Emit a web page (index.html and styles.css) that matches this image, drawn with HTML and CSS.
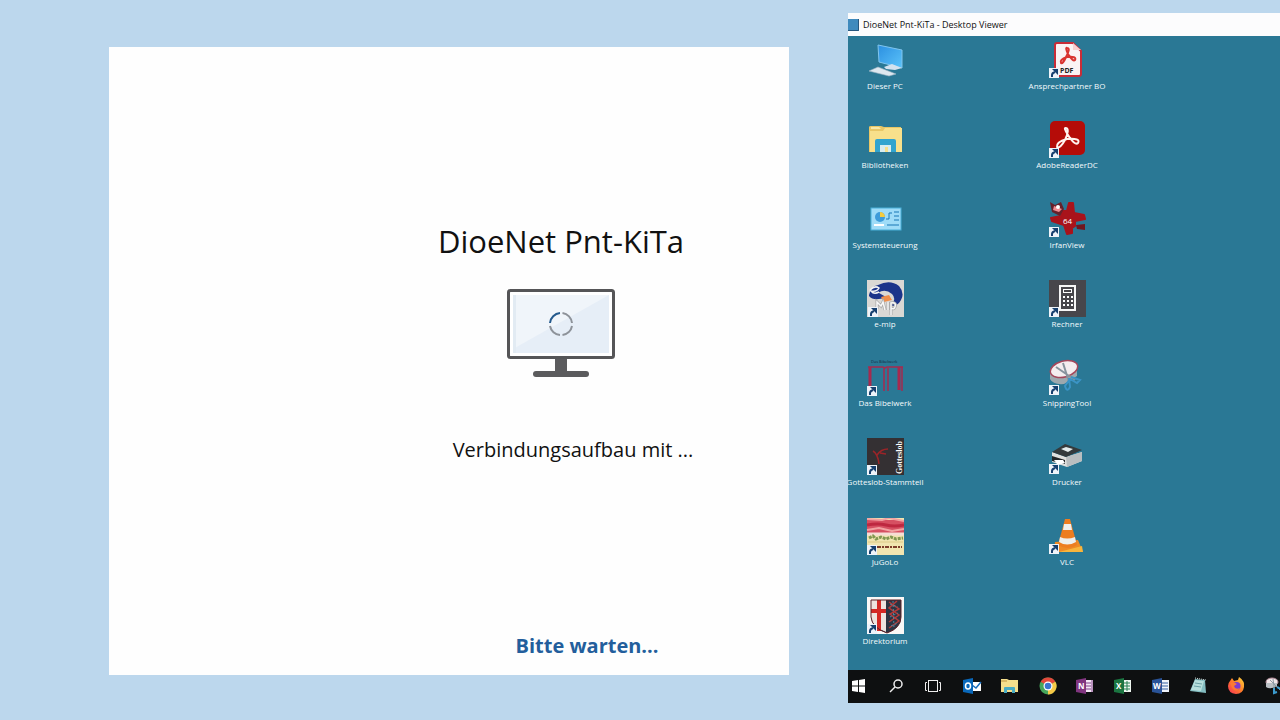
FILE: index.html
```html
<!DOCTYPE html>
<html lang="de">
<head>
<meta charset="utf-8">
<meta name="viewport" content="width=device-width, initial-scale=1">
<title>DioeNet Pnt-KiTa</title>
<link rel="stylesheet" href="styles.css">
</head>
<body>
<svg class="defs" aria-hidden="true">
  <defs>
    <symbol id="shortcut" viewBox="0 0 10 10"><rect width="10" height="10" fill="#eef3f9"/><path d="M3 9V7Q3 5 6 4" fill="none" stroke="#17406f" stroke-width="2"/><path d="M3 1H9V7z" fill="#17406f"/></symbol>
    <linearGradient id="screen" x1="0" y1="0" x2="1" y2="1"><stop offset="0" stop-color="#2b8fe0"/><stop offset="1" stop-color="#5cc3fa"/></linearGradient>
    <linearGradient id="fox" x1="0" y1="1" x2="1" y2="0"><stop offset="0" stop-color="#f5305a"/><stop offset=".5" stop-color="#ff7a2a"/><stop offset="1" stop-color="#ffdc3c"/></linearGradient>
  </defs>
</svg>
<main class="page">
  <section class="connect">
    <div class="connect-body">
      <h1 class="connect-title">DioeNet Pnt-KiTa</h1>
      <svg class="monitor" viewBox="0 0 110 90" aria-hidden="true">
        <rect x="2.5" y="2.5" width="105" height="67" rx="2" fill="#fff" stroke="#555557" stroke-width="3"/>
        <rect x="7" y="7" width="96" height="58" fill="#e6eef7"/>
        <path d="M7 7H103L7 61z" fill="#f0f5fa"/>
        <rect x="7" y="7" width="3" height="58" fill="#e2ebf3"/>
        <path d="M49 71H61V84H49z" fill="#5b5b5d"/>
        <rect x="27" y="83" width="56" height="6" rx="3" fill="#5b5b5d"/>
        <g fill="none" stroke-width="2"><path d="M44 35A11 11 0 0 1 54 25" stroke="#245a8d"/><path d="M56.500 25A11 11 0 0 1 66 35M66 38A11 11 0 0 1 56.500 47M54 47A11 11 0 0 1 44 38" stroke="#8d9299"/></g>
      </svg>
      <p class="connect-message">Verbindungsaufbau mit ...</p>
    </div>
    <p class="connect-wait" role="status">Bitte warten...</p>
  </section>

  <section class="viewer">
    <header class="titlebar">
      <svg class="titlebar-icon" viewBox="0 0 12 12" aria-hidden="true"><rect width="11" height="12" fill="#3f8abd"/><path d="M0 11.500H10.500V0" fill="none" stroke="#27577e"/></svg>
      <span>DioeNet Pnt-KiTa - Desktop Viewer</span>
    </header>
    <div class="desktop">
      <button class="item"><svg class="icon" viewBox="0 0 38 38"><path d="M12 3L36 8V26L13 20z" fill="url(#screen)" stroke="#80c5ee"/><path d="M18 25L26 22L36 26L29 28L20 27z" fill="#d4e2ef"/><path d="M3 29L12 25L30 32L23 34z" fill="#dde7ef" stroke="#9db3c3" stroke-width=".6"/></svg><span>Dieser PC</span></button>
      <button class="item"><svg class="icon" viewBox="0 0 38 38"><path d="M3 6Q3 5 5 5H15L18 6H35V31H3z" fill="#e9c766"/><path d="M5 6H13L15 8H5z" fill="#f7e7a7"/><path d="M4 10H17L19 7H36V31H4z" fill="#f8e08b"/><path d="M9 31V20Q9 18 11 18H28Q30 18 30 20V31H25V24H14V31z" fill="#31a4cf"/><path d="M14 24H25V31H22V26H19V31H14z" fill="#d8edf0"/></svg><span>Bibliotheken</span></button>
      <button class="item"><svg class="icon" viewBox="0 0 38 38"><rect x="5" y="7" width="30" height="22" fill="#9fdcf8" stroke="#49afd9"/><circle cx="14" cy="16" r="5" fill="#3e9cda"/><path d="M14 16V11A5 5 0 0 1 19 16z" fill="#f5cb3d"/><path d="M20 18H23V12H26M28 11H33M28 15H33M28 19H33M21 24H33" fill="none" stroke="#1877b5"/><path d="M8 24H18" stroke="#fff" stroke-width="2"/></svg><span>Systemsteuerung</span></button>
      <button class="item"><svg class="icon" viewBox="0 0 38 38"><rect x="1" y="0" width="37" height="37" fill="#dad8d4"/><path d="M12 5Q24-1 33 6Q39 13 35 20Q32 26 25 26Q31 19 26 14Q19 8 12 13z" fill="#1c348a"/><path d="M3 16Q8 22 20 17L13 13L12 5Q5 6 3 15" fill="#1c348a"/><path d="M4 10Q9 5 13 8Q11 12 5 11Q8 15 13 12" fill="none" stroke="#f5f5f5" stroke-width="1.500"/><path d="M15 17L23 15L26 20L18 22z" fill="#f18d48"/><path d="M11 29V22L15 26L17 22L19 30M22 22V30M25 35V23Q31 22 29 27Q28 30 25 28" fill="none" stroke="#aaa" stroke-width="3"/><path d="M11 29V22L15 26L17 22L19 30M22 22V30M25 35V23Q31 22 29 27Q28 30 25 28" fill="none" stroke="#f8f8f8" stroke-width="1.500"/><use href="#shortcut" x="2" y="27" width="10" height="10"/></svg><span>e-mip</span></button>
      <button class="item"><svg class="icon" viewBox="0 0 38 38"><text x="5" y="4" class="tiny">Das Bibelwerk</text><path d="M2 8H17L19 9L21 8H37M18 9V32M22 9V32" fill="none" stroke="#a62a4f" stroke-width="1.500"/><path d="M4 8V30M33 8V31" stroke="#a62a4f" stroke-width="3"/><path d="M36 8V32" stroke="#a62a4f" stroke-width="1.500"/><use href="#shortcut" x="1" y="27" width="10" height="10"/></svg><span>Das Bibelwerk</span></button>
      <button class="item"><svg class="icon" viewBox="0 0 38 38"><rect x="1" y="0" width="37" height="37" fill="#343033"/><path d="M7 13Q12 16 13 26M11 17Q15 11 22 11M14 15L20 16" fill="none" stroke="#9c2428" stroke-width="1.500"/><text transform="translate(36 36) rotate(-90)" class="book">Gotteslob</text><use href="#shortcut" x="1" y="27" width="10" height="10"/></svg><span>Gotteslob-Stammteil</span></button>
      <button class="item"><svg class="icon" viewBox="0 0 38 38"><rect x="1" y="0" width="37" height="37" fill="#f1e5b0"/><rect x="1" y="2" width="37" height="13" fill="#d65062"/><path d="M1 1L16 2L23 0L38 3M1 12L13 10L26 13L38 11" stroke="#f2a2a2" stroke-width="2" fill="none"/><path d="M1 7Q12 5 20 7T38 7" stroke="#be2840" stroke-width="3" fill="none"/><path d="M1 16H38" stroke="#f6ded5" stroke-width="3"/><path d="M3 20L7 18L10 21L15 19L20 21L25 19L30 21L37 20" stroke="#819750" stroke-width="3" stroke-dasharray="3 1" fill="none"/><path d="M2 24H37" stroke="#ddca88"/><path d="M11 29H36" stroke="#7d3e2a" stroke-width="2" stroke-dasharray="4 1 2 1"/><use href="#shortcut" x="1" y="27" width="10" height="10"/></svg><span>JuGoLo</span></button>
      <button class="item"><svg class="icon" viewBox="0 0 38 38"><rect x="1" y="0" width="37" height="37" fill="#faf8f6"/><path d="M5 3H35V20Q35 31 21 36Q6 31 5 20z" fill="#2c3442"/><path d="M5 3H20V35Q6 30 5 20z" fill="#eee3df"/><path d="M13 3V34M5 14H20" stroke="#d42825" stroke-width="4"/><path d="M23 5L33 12L24 17L33 24L23 31M31 4L23 11L33 18L23 25" stroke="#b43b3a" fill="none" stroke-width="1.500"/><path d="M24 7L32 10M27 4L28 32M24 20L32 16M25 29L32 26" stroke="#5188a0" stroke-dasharray="2 2"/><path d="M5 3H35V20Q35 31 21 36Q6 31 5 20z" fill="none" stroke="#5c2229"/><use href="#shortcut" x="1" y="27" width="10" height="10"/></svg><span>Direktorium</span></button>

      <button class="item"><svg class="icon" viewBox="0 0 38 38"><path d="M9 1H25L33 9V32Q33 34 31 34H9Q7 34 7 32V3Q7 1 9 1z" fill="#faf3f4" stroke="#c92d38" stroke-width="2"/><path d="M25 1V8H33z" fill="#f8cfd0"/><path d="M13 21Q11 18 19 15Q29 14 27 18Q25 20 20 12Q17 5 19 6Q23 6 18 15Q15 22 13 21z" fill="none" stroke="#d93430" stroke-width="2"/><text x="12" y="31" class="pdf">PDF</text><use href="#shortcut" x="1" y="26" width="10" height="10"/></svg><span>Ansprechpartner BO</span></button>
      <button class="item"><svg class="icon" viewBox="0 0 38 38"><rect x="2" y="0" width="35" height="34" rx="5" fill="#b50c08"/><path d="M9 26Q8 21 19 18Q33 17 30 22Q27 25 20 14Q15 6 18 7Q22 8 17 19Q12 28 9 26z" fill="none" stroke="#fff4ef" stroke-width="2"/><use href="#shortcut" x="1" y="27" width="10" height="10"/></svg><span>AdobeReaderDC</span></button>
      <button class="item"><svg class="icon" viewBox="0 0 38 38"><g stroke-linejoin="round" stroke="#a9131b" stroke-width="2"><path d="M3 17L13 15L15 10L19 10L21 2L25 2L26 12L36 14L37 18L27 20V25L24 27L24 32L19 33L16 24L4 20z" fill="#a9131b"/></g><path d="M28 24L37 23V29L29 28z" fill="#6f1720"/><path d="M2 1L7 4L13 1L16 8L12 15L4 11z" fill="#65202b"/><path d="M6 5L14 8L11 11L5 9z" fill="#ef8b91"/><circle cx="10" cy="6" r="2" fill="#fff"/><text x="15" y="23" class="sixty">64</text><use href="#shortcut" x="1" y="26" width="10" height="10"/></svg><span>IrfanView</span></button>
      <button class="item"><svg class="icon" viewBox="0 0 38 38"><rect x="1" y="0" width="37" height="37" fill="#47464b"/><rect x="12" y="6" width="15" height="24" fill="none" stroke="#f6f6f6" stroke-width="2"/><rect x="15.500" y="9.500" width="8" height="3" fill="none" stroke="#fff"/><path d="M15 17H25M15 21H25M15 25H25" stroke="#fff" stroke-width="2" stroke-dasharray="2"/><use href="#shortcut" x="1" y="27" width="10" height="10"/></svg><span>Rechner</span></button>
      <button class="item"><svg class="icon" viewBox="0 0 38 38"><path d="M2 12V20Q5 26 16 25L29 17V8" fill="#9da8ae"/><ellipse cx="16" cy="10" rx="14" ry="8" transform="rotate(-15 16 10)" fill="#f4edef" stroke="#a4475b" stroke-width="1.500"/><path d="M8 8L27 21M15 4L21 23" stroke="#88939d" stroke-width="2"/><path d="M23 18L32 21L29 24L22 20L17 27Q19 34 22 28L21 19" fill="none" stroke="#3b94c6" stroke-width="2"/><use href="#shortcut" x="1" y="26" width="10" height="10"/></svg><span>SnippingTool</span></button>
      <button class="item"><svg class="icon" viewBox="0 0 38 38"><path d="M4 14L18 19L34 14V23L19 29L4 24z" fill="#dfe0de"/><path d="M18 19L34 14V23L19 29z" fill="#b9bec0"/><path d="M4 14L17 6L34 12L18 19z" fill="#343a3c"/><path d="M13 11L18 9L25 11L20 14z" fill="#e3ebeb"/><path d="M4 18L17 22V26L4 23z" fill="#232628"/><path d="M6 22L15 22L17 25L10 27z" fill="#fff"/><use href="#shortcut" x="1" y="26" width="10" height="10"/></svg><span>Drucker</span></button>
      <button class="item"><svg class="icon" viewBox="0 0 38 38"><path d="M7 24L30 22L35 34H6z" fill="#ee8a25"/><path d="M11 34L34 28L35 34z" fill="#f9b53c"/><path d="M17 1H22L29 27Q20 33 10 27z" fill="#ed7d20"/><path d="M16 6H23L24 12H15z" fill="#eeefed"/><path d="M12 19Q19 22 27 19L28 24Q19 29 11 24z" fill="#eeefed"/><use href="#shortcut" x="1" y="26" width="10" height="10"/></svg><span>VLC</span></button>
    </div>
    <nav class="taskbar" aria-label="Taskleiste">
      <button class="task" aria-label="Start"><svg viewBox="0 0 22 22"><path d="M4 6L10 5V10.500H4zM11 5L17 4V10.500H11zM4 11.500H10V17L4 16zM11 11.500H17V18L11 17z" fill="#fff"/></svg></button>
      <button class="task" aria-label="Suche"><svg viewBox="0 0 22 22" fill="none" stroke="#eee" stroke-width="1.500"><circle cx="12" cy="9" r="4"/><path d="M9 12L4 17"/></svg></button>
      <button class="task" aria-label="Taskansicht"><svg viewBox="0 0 22 22" fill="none" stroke="#eee"><rect x="5.500" y="5.500" width="9" height="11"/><path d="M4 7.500H2.500V15.500H4M16 7.500H17.500V15.500H16"/></svg></button>
      <button class="task" aria-label="Outlook"><svg viewBox="0 0 22 22"><rect x="10" y="7" width="10" height="9" fill="#fff"/><path d="M11 10L15 13L20 7" fill="none" stroke="#176dbb" stroke-width="1.500"/><path d="M2 5L12 3V19L2 17z" fill="#0968ba"/><ellipse cx="7" cy="11" rx="2.500" ry="3" fill="none" stroke="#fff" stroke-width="1.500"/></svg></button>
      <button class="task" aria-label="Explorer"><svg viewBox="0 0 22 22"><path d="M2 4H8L10 5H19V17H2z" fill="#f5df8c"/><path d="M2 5H8V7H2z" fill="#d9b965"/><path d="M5 18V13Q5 12 6 12H15Q16 12 16 13V18H13V15H8V18z" fill="#49acc4"/></svg></button>
      <button class="task" aria-label="Chrome"><svg viewBox="0 0 22 22"><circle cx="11" cy="11" r="8.500" fill="#45a65b"/><path d="M11 11L3.600 6.700A8.500 8.500 0 0 1 18.400 6.700z" fill="#e3483b"/><path d="M11 11L18.400 6.700A8.500 8.500 0 0 1 11 19.500z" fill="#f6c947"/><circle cx="11" cy="11" r="4.500" fill="#fff"/><circle cx="11" cy="11" r="3.300" fill="#3975d0"/></svg></button>
      <button class="task" aria-label="OneNote"><svg viewBox="0 0 22 22"><rect x="11" y="5" width="8" height="12" fill="#f4e7f5"/><path d="M12 8H17M12 11H17M12 14H17M18 5V17" stroke="#80408a"/><path d="M2 5L12 3V19L2 17z" fill="#80357f"/><text x="4" y="14" class="letter">N</text></svg></button>
      <button class="task" aria-label="Excel"><svg viewBox="0 0 22 22"><rect x="11" y="5" width="8" height="12" fill="#eef7f0"/><path d="M12 8H18M12 11H18M12 14H18M15 6V16" stroke="#278052"/><path d="M2 5L12 3V19L2 17z" fill="#1b7541"/><text x="4" y="14" class="letter">X</text></svg></button>
      <button class="task" aria-label="Word"><svg viewBox="0 0 22 22"><rect x="11" y="5" width="8" height="12" fill="#f0f4fb"/><path d="M12 8H18M12 11H18M12 14H18" stroke="#3661a4"/><path d="M2 5L12 3V19L2 17z" fill="#295397"/><text x="3" y="14" class="letter">W</text></svg></button>
      <button class="task" aria-label="Editor"><svg viewBox="0 0 22 22"><path d="M8 4L18 5L19 18L3 16z" fill="#83bdc1"/><path d="M8 5L17 6L14 16L4 15z" fill="#b7dfdc"/><path d="M8 8L15 9M7 11L14 12" stroke="#6ba2a7"/><path d="M8 3L19 5" stroke="#d8e5e5" stroke-dasharray="1"/></svg></button>
      <button class="task" aria-label="Firefox"><svg viewBox="0 0 22 22"><path d="M5 6L7 3L9 6L13 5L14 2Q20 6 19 12Q18 19 11 19Q3 18 3 11Q3 8 5 6z" fill="url(#fox)"/><circle cx="11.500" cy="11" r="4" fill="#7d3bd0"/><path d="M5 8Q8 6 12 9L9 11Q10 15 15 13Q11 18 7 13z" fill="#fc7935"/></svg></button>
      <button class="task" aria-label="Snipping Tool"><svg viewBox="0 0 22 22"><ellipse cx="9" cy="7" rx="6" ry="4" fill="#f0e6e8" stroke="#ae8795"/><path d="M3 8V12Q7 15 14 11V8" fill="#b9bfc4"/><path d="M7 5L17 15M10 4L12 18" stroke="#8e9ba5"/><path d="M11 13V18L14 17M14 12L18 14" fill="none" stroke="#3b9bce" stroke-width="2"/></svg></button>
    </nav>
  </section>
</main>
</body>
</html>
```
FILE: styles.css
```css
* { box-sizing: border-box; }
body {
  margin: 0;
  background: #bcd7ed;
  font-family: "Open Sans", "Noto Sans", sans-serif;
}
h1, p { margin: 0; }
button {
  border: 0;
  padding: 0;
  background: none;
  color: inherit;
  font: inherit;
}
.defs { position: absolute; width: 0; height: 0; }
.page {
  display: grid;
  grid-template-columns: 680fr 432fr;
  column-gap: 59px;
  min-height: 100vh;
  padding: 13px 0 17px 109px;
}
.connect {
  display: flex;
  flex-direction: column;
  justify-content: space-between;
  margin: 34px 0 28px;
  padding: 170px 0 13px 224px;
  background: #fefefe;
  color: #111;
}
.connect-body {
  display: flex;
  flex-direction: column;
  align-items: center;
}
.connect-title {
  font-size: 31px;
  font-weight: 400;
  line-height: 48px;
}
.monitor { width: 110px; height: 90px; margin-top: 23px; }
.connect-message {
  margin-top: 56px;
  padding-left: 24px;
  font-size: 20px;
  line-height: 32px;
}
.connect-wait {
  padding-left: 52px;
  text-align: center;
  color: #235e9c;
  font-size: 20px;
  font-weight: 700;
  line-height: 32px;
}
.viewer {
  display: flex;
  flex-direction: column;
  min-width: 0;
  overflow: hidden;
}
.titlebar {
  display: flex;
  align-items: center;
  gap: 3px;
  height: 23px;
  background: #fcfcfd;
  color: #111;
  font-size: 9px;
}
.titlebar-icon { width: 12px; height: 12px; }
.desktop {
  flex: 1;
  display: grid;
  grid-template-rows: repeat(8, 1fr);
  grid-template-columns: 74px 80px;
  grid-auto-flow: column;
  column-gap: 105px;
  background: #2a7895;
}
.item {
  display: flex;
  flex-direction: column;
  align-items: center;
  padding-top: 6px;
  color: #f4fafc;
  font-size: 8px;
  line-height: 12px;
  white-space: nowrap;
}
.icon { width: 38px; height: 38px; flex: none; }
.taskbar {
  display: flex;
  justify-content: space-between;
  align-items: center;
  height: 33px;
  margin-right: -5px;
  padding-bottom: 1px;
  background: #0e1011;
}
.task { width: 22px; height: 22px; }
.task svg { display: block; width: 22px; height: 22px; }
.tiny { font-size: 4px; fill: #14293d; }
.book { font: 700 8px "Liberation Serif", serif; fill: #fff; }
.pdf { font-size: 7px; font-weight: 700; fill: #222; }
.sixty { font-size: 8px; fill: #fff; }
.letter { font-size: 8px; font-weight: 700; fill: #fff; }
```
